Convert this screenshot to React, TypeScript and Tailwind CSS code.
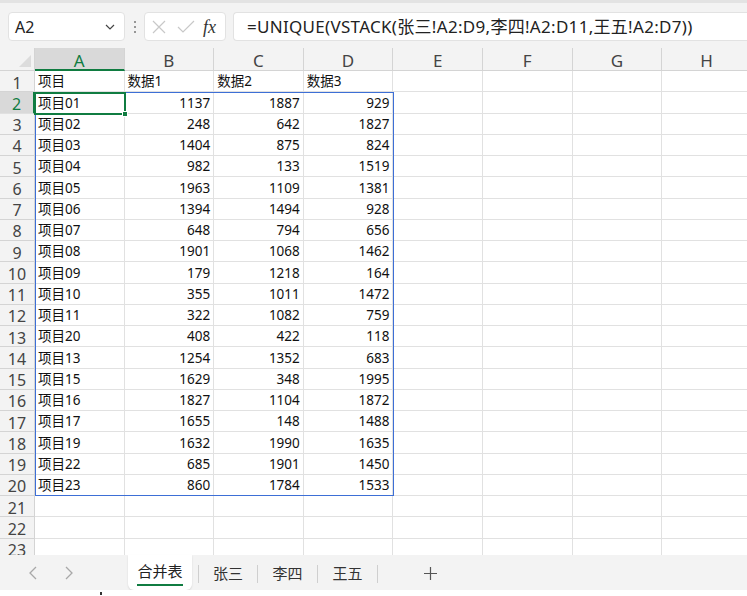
import React from "react";

const rows: [string, string, string, string][] = [
  ["项目", "数据1", "数据2", "数据3"],
  ["项目01", "1137", "1887", "929"],
  ["项目02", "248", "642", "1827"],
  ["项目03", "1404", "875", "824"],
  ["项目04", "982", "133", "1519"],
  ["项目05", "1963", "1109", "1381"],
  ["项目06", "1394", "1494", "928"],
  ["项目07", "648", "794", "656"],
  ["项目08", "1901", "1068", "1462"],
  ["项目09", "179", "1218", "164"],
  ["项目10", "355", "1011", "1472"],
  ["项目11", "322", "1082", "759"],
  ["项目20", "408", "422", "118"],
  ["项目13", "1254", "1352", "683"],
  ["项目15", "1629", "348", "1995"],
  ["项目16", "1827", "1104", "1872"],
  ["项目17", "1655", "148", "1488"],
  ["项目19", "1632", "1990", "1635"],
  ["项目22", "685", "1901", "1450"],
  ["项目23", "860", "1784", "1533"],
  ["", "", "", ""],
  ["", "", "", ""],
  ["", "", "", ""],
];

const cols = ["A", "B", "C", "D", "E", "F", "G", "H"];
const font = { fontFamily: '"Noto Sans", "Noto Sans CJK SC", sans-serif' };

export default function App() {
  return (
    <div className="w-[747px] h-[596px] overflow-hidden bg-[#f3f3f3] flex flex-col" style={font}>
      {/* top strip */}
      <div className="h-[3px] bg-[#e3e3e3] shrink-0" />
      {/* formula bar */}
      <div className="h-[45px] flex items-start pt-[9px] shrink-0">
        <div className="ml-[8px] w-[117px] h-[29px] bg-white rounded-[4px] border border-[#e2e2e2] flex items-center justify-between pl-[6px] pr-[8px]">
          <span className="text-[16px] text-[#222] leading-none">A2</span>
          <svg width="12" height="12" viewBox="0 0 12 12"><path d="M2 4 L6 8 L10 4" fill="none" stroke="#444" strokeWidth="1.2" /></svg>
        </div>
        <div className="w-[19px] h-[29px] flex flex-col items-center justify-center gap-[3px]">
          <div className="w-[2px] h-[2px] bg-[#777] rounded-full" />
          <div className="w-[2px] h-[2px] bg-[#777] rounded-full" />
          <div className="w-[2px] h-[2px] bg-[#777] rounded-full" />
        </div>
        <div className="w-[82px] h-[29px] bg-white rounded-[4px] border border-[#e2e2e2] flex items-center pl-[6px]">
          <svg width="16" height="16" viewBox="0 0 16 16"><path d="M2 2 L14 14 M14 2 L2 14" stroke="#c8c8c8" strokeWidth="1.2" /></svg>
          <svg className="ml-[10px]" width="18" height="14" viewBox="0 0 18 14"><path d="M1 7 L6 12 L17 1" fill="none" stroke="#c8c8c8" strokeWidth="1.2" /></svg>
          <span className="ml-[8px] text-[18px] italic text-[#333] leading-none" style={{ fontFamily: '"Liberation Serif", serif' }}>fx</span>
        </div>
        <div className="ml-[7px] flex-1 h-[29px] bg-white rounded-l-[4px] border border-r-0 border-[#e2e2e2] flex items-center pl-[13px]">
          <span className="text-[17px] tracking-[0.3px] text-[#222] leading-none whitespace-nowrap">=UNIQUE(VSTACK(张三!A2:D9,李四!A2:D11,王五!A2:D7))</span>
        </div>
      </div>
      {/* grid */}
      <div className="relative flex-1 overflow-hidden bg-white">
        <div className="grid grid-cols-[35px_repeat(8,89.6px)]">
          {/* header row */}
          <div className="h-[23px] bg-[#f3f3f3] border-r border-b border-[#d4d4d4] relative">
            <svg className="absolute right-[3px] bottom-[3px]" width="12" height="12" viewBox="0 0 12 12"><path d="M12 0 L12 12 L0 12 Z" fill="#dcdcdc" /></svg>
          </div>
          {cols.map((c, i) => (
            <div
              key={c}
              className={
                i === 0
                  ? "h-[23px] pt-[3px] bg-[#d9d9d9] border-r border-[#d4d4d4] border-b-2 border-b-[#107c41] text-[#107c41] text-[17px] flex items-center justify-center leading-none"
                  : "h-[23px] pt-[3px] bg-[#f3f3f3] border-r border-b border-[#d4d4d4] text-[#444] text-[17px] flex items-center justify-center leading-none"
              }
            >
              {c}
            </div>
          ))}
          {rows.map((r, ri) => (
            <React.Fragment key={ri}>
              <div
                className={
                  ri === 1
                    ? "h-[21.25px] pt-[3px] bg-[#d9d9d9] border-r-2 border-r-[#107c41] border-b border-[#e0e0e0] text-[#107c41] text-[16px] flex items-center justify-center leading-none"
                    : "h-[21.25px] pt-[3px] bg-[#f3f3f3] border-r border-b border-[#d4d4d4] text-[#444] text-[16px] flex items-center justify-center leading-none"
                }
              >
                {ri + 1}
              </div>
              {cols.map((c, ci) => {
                const v = ci < 4 ? r[ci] : "";
                const right = ri > 0 && ci > 0;
                return (
                  <div
                    key={c}
                    className={
                      "h-[21.25px] pt-[2px] border-r border-b border-[#e1e1e1] text-[13.5px] text-[#111] flex items-center px-[3px] leading-none whitespace-nowrap " +
                      (right ? "justify-end" : "justify-start")
                    }
                  >
                    {v}
                  </div>
                );
              })}
            </React.Fragment>
          ))}
        </div>
        {/* blue selection outline A2:D20 */}
        <div className="absolute left-[35px] top-[44px] w-[359px] h-[404px] border border-[#3d6fd6] pointer-events-none" />
        {/* active cell A2 */}
        <div className="absolute left-[34px] top-[43.5px] w-[92px] h-[23px] border-2 border-[#107c41] pointer-events-none" />
        <div className="absolute left-[122px] top-[63px] w-[6px] h-[6px] bg-[#107c41] border border-white" />
      </div>
      {/* sheet tabs */}
      <div className="h-[35px] bg-[#f3f3f3] flex items-stretch shrink-0 relative">
        <div className="w-[128px] flex items-center">
          <svg className="ml-[29px]" width="8" height="14" viewBox="0 0 8 14"><path d="M7 1 L1 7 L7 13" fill="none" stroke="#a8a8a8" strokeWidth="1.3" /></svg>
          <svg className="ml-[28px]" width="8" height="14" viewBox="0 0 8 14"><path d="M1 1 L7 7 L1 13" fill="none" stroke="#a8a8a8" strokeWidth="1.3" /></svg>
        </div>
        <div className="w-[64px] bg-white rounded-b-[6px] flex flex-col items-center justify-center shadow-[0_1px_2px_rgba(0,0,0,0.12)]">
          <span className="text-[15px] text-[#222] leading-none mt-[4px]">合并表</span>
          <div className="w-[46px] h-[2px] bg-[#107c41] mt-[5px]" />
        </div>
        <div className="flex items-center pt-[2px]">
          <div className="w-[1px] h-[18px] bg-[#cfcfcf] ml-[6px]" />
          <span className="w-[58px] text-center text-[15px] text-[#333]">张三</span>
          <div className="w-[1px] h-[18px] bg-[#cfcfcf]" />
          <span className="w-[59px] text-center text-[15px] text-[#333]">李四</span>
          <div className="w-[1px] h-[18px] bg-[#cfcfcf]" />
          <span className="w-[59px] text-center text-[15px] text-[#333]">王五</span>
          <div className="w-[1px] h-[18px] bg-[#cfcfcf]" />
          <svg className="ml-[46px]" width="13" height="13" viewBox="0 0 13 13"><path d="M6.5 0 V13 M0 6.5 H13" stroke="#555" strokeWidth="1.2" /></svg>
        </div>
      </div>
      <div className="h-[6px] bg-white shrink-0 relative">
        <div className="absolute left-[100px] top-[2px] w-[2px] h-[3px] bg-[#333]" />
      </div>
    </div>
  );
}
